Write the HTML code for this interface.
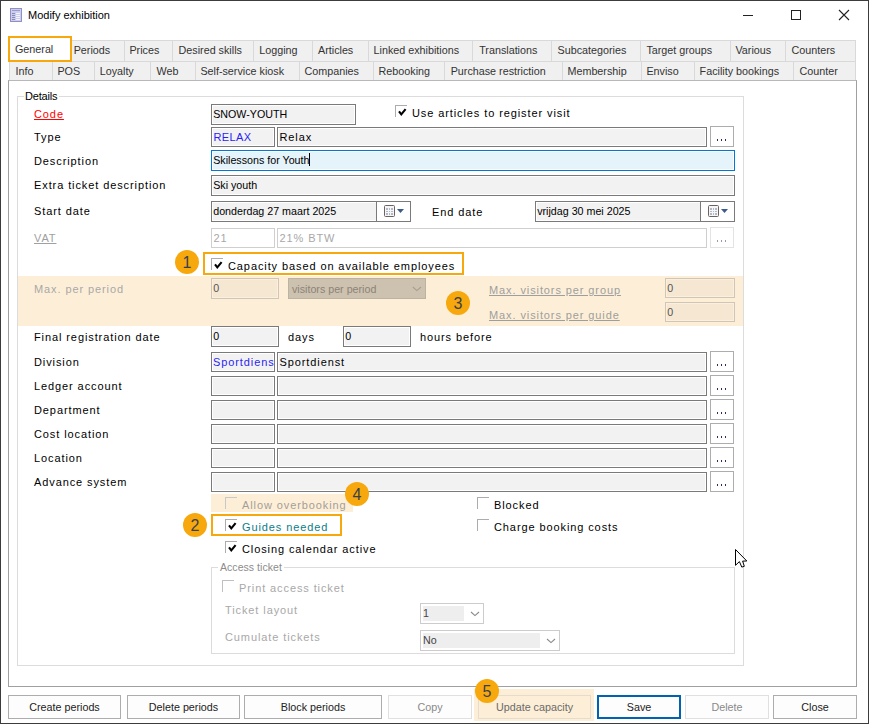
<!DOCTYPE html>
<html><head><meta charset="utf-8">
<style>
*{box-sizing:border-box;margin:0;padding:0}
html,body{width:869px;height:724px;overflow:hidden;background:#fff}
body{position:relative;font-family:"Liberation Sans",sans-serif;color:#000}
.a{position:absolute}
#win{left:0;top:0;width:869px;height:724px;border:1px solid #3c3c3c}
.title{left:28px;top:9px;font-size:11px;color:#000;white-space:pre}
.tab{position:absolute;height:21px;background:#f0f0f0;border:1px solid #d9d9d9;font-size:10.75px;color:#333;padding-left:5px;line-height:19px;white-space:pre}
.panel{left:8px;top:80px;width:849px;height:607px;border:1px solid #a0a0a0;border-top-color:#b8b8b8;background:#fff}
.lbl{position:absolute;font-size:11px;letter-spacing:0.9px;white-space:pre;color:#000;line-height:14px}
.inp{position:absolute;height:20px;background:#f2f2f2;border:1px solid #7a7a7a;box-shadow:inset 0 0 0 1px #fff;font-size:10.7px;line-height:18px;padding-left:1.2px;white-space:pre;overflow:hidden}
.inp.v{font-size:11px;letter-spacing:0.9px;padding-left:1.5px}
.dis{border-color:#cfcfcf;color:#a8a8a8;background:#fff}
.btn3{position:absolute;width:24px;height:21px;background:#fff;border:1px solid #adadad}
.btn3 i{position:absolute;left:6px;top:12px;width:1px;height:2px;background:#2e2a5e}
.chk{position:absolute;width:12px;height:12px;border-top:1px solid #acacac;border-left:1px solid #acacac}
.chk svg{position:absolute;left:1px;top:1px}
.circ{position:absolute;width:24px;height:24px;border-radius:50%;background:#f6a80c;color:#3a404c;font-size:16px;text-align:center;line-height:26px}
.obox{position:absolute;border:2px solid #f6a80c}
.btn{position:absolute;top:695px;height:24px;background:#fdfdfd;border:1px solid #adadad;font-size:10.75px;text-align:center;line-height:22px;color:#222;white-space:pre}
.gb{position:absolute;border:1px solid #dcdcdc}
</style></head><body>
<div id="win" class="a"></div>
<!-- title icon -->
<svg class="a" style="left:10px;top:8px" width="12" height="14" viewBox="0 0 12 14">
<rect x="0.5" y="0.5" width="11" height="13" fill="#cdcdee" stroke="#9090c4"/>
<rect x="2" y="2" width="8" height="1" fill="#9a9acc"/>
<rect x="2" y="5" width="3" height="1" fill="#8a8ab8"/><rect x="6" y="5" width="4" height="1" fill="#f4f4ff"/>
<rect x="2" y="7" width="3" height="1" fill="#8a8ab8"/><rect x="6" y="7" width="4" height="1" fill="#f4f4ff"/>
<rect x="2" y="9" width="3" height="1" fill="#8a8ab8"/><rect x="6" y="9" width="4" height="1" fill="#f4f4ff"/>
<rect x="2" y="11" width="3" height="1" fill="#8a8ab8"/><rect x="6" y="11" width="4" height="1" fill="#f4f4ff"/>
</svg>
<div class="a title">Modify exhibition</div>
<!-- window controls -->
<div class="a" style="left:743px;top:15px;width:10px;height:1px;background:#222"></div>
<div class="a" style="left:791px;top:10px;width:10px;height:10px;border:1px solid #222"></div>
<svg class="a" style="left:838px;top:9px" width="12" height="12" viewBox="0 0 12 12"><path d="M1 1L11 11M11 1L1 11" stroke="#222" stroke-width="1.1"/></svg>

<!-- tabs row 1 -->
<div class="tab" style="left:71px;top:40px;width:54px;height:22px;padding-left:1.7px">Periods</div>
<div class="tab" style="left:124px;top:40px;width:49px;height:22px;padding-left:4.4px">Prices</div>
<div class="tab" style="left:172px;top:40px;width:82px;height:22px;padding-left:5.6px">Desired skills</div>
<div class="tab" style="left:253px;top:40px;width:60px;height:22px;padding-left:5.3px">Logging</div>
<div class="tab" style="left:312px;top:40px;width:57px;height:22px;padding-left:5.0px">Articles</div>
<div class="tab" style="left:368px;top:40px;width:105px;height:22px;padding-left:4.6px">Linked exhibitions</div>
<div class="tab" style="left:472px;top:40px;width:80px;height:22px;padding-left:6.2px">Translations</div>
<div class="tab" style="left:551px;top:40px;width:90px;height:22px;padding-left:5.6px">Subcategories</div>
<div class="tab" style="left:640px;top:40px;width:91px;height:22px;padding-left:5.4px">Target groups</div>
<div class="tab" style="left:730px;top:40px;width:56px;height:22px;padding-left:4.5px">Various</div>
<div class="tab" style="left:785px;top:40px;width:71px;height:22px;padding-left:5.5px">Counters</div>
<!-- tabs row 2 -->
<div class="tab" style="left:9px;top:62px;width:44px;height:19px;border-top:0;line-height:18px;padding-left:5.6px">Info</div>
<div class="tab" style="left:52px;top:62px;width:43px;height:19px;border-top:0;line-height:18px;padding-left:4.4px">POS</div>
<div class="tab" style="left:94px;top:62px;width:57px;height:19px;border-top:0;line-height:18px;padding-left:4.7px">Loyalty</div>
<div class="tab" style="left:150px;top:62px;width:46px;height:19px;border-top:0;line-height:18px;padding-left:5.6px">Web</div>
<div class="tab" style="left:195px;top:62px;width:105px;height:19px;border-top:0;line-height:18px;padding-left:4.4px">Self-service kiosk</div>
<div class="tab" style="left:299px;top:62px;width:75px;height:19px;border-top:0;line-height:18px;padding-left:4.6px">Companies</div>
<div class="tab" style="left:373px;top:62px;width:72px;height:19px;border-top:0;line-height:18px;padding-left:4.6px">Rebooking</div>
<div class="tab" style="left:444px;top:62px;width:119px;height:19px;border-top:0;line-height:18px;padding-left:5.7px">Purchase restriction</div>
<div class="tab" style="left:562px;top:62px;width:80px;height:19px;border-top:0;line-height:18px;padding-left:4.5px">Membership</div>
<div class="tab" style="left:641px;top:62px;width:54px;height:19px;border-top:0;line-height:18px;padding-left:4.4px">Enviso</div>
<div class="tab" style="left:694px;top:62px;width:100px;height:19px;border-top:0;line-height:18px;padding-left:4.6px">Facility bookings</div>
<div class="tab" style="left:793px;top:62px;width:63px;height:19px;border-top:0;line-height:18px;padding-left:5.6px">Counter</div>
<!-- selected tab -->
<div class="a" style="left:8px;top:36px;width:64px;height:26px;background:#fff;border:2px solid #f6a80c;font-size:10.75px;line-height:22px;padding-left:5px;color:#333">General</div>

<!-- panel -->
<div class="a panel"></div>
<!-- Details groupbox -->
<div class="gb" style="left:17px;top:96px;width:727px;height:570px"></div>
<div class="lbl" style="left:24px;top:89px;background:#fff;padding:0 2px 0 1px;font-size:11px;letter-spacing:-0.2px">Details</div>


<!-- labels -->
<div class="lbl" style="left:34px;top:107px;color:#ff0000;text-decoration:underline">Code</div>
<div class="lbl" style="left:34px;top:130px">Type</div>
<div class="lbl" style="left:34px;top:154px">Description</div>
<div class="lbl" style="left:34px;top:178px">Extra ticket description</div>
<div class="lbl" style="left:34px;top:204px">Start date</div>
<div class="lbl" style="left:34px;top:231px;color:#a0a0a0;text-decoration:underline">VAT</div>

<!-- Code -->
<div class="inp" style="left:211px;top:104px;width:145px;height:21px">SNOW-YOUTH</div>
<div class="chk" style="left:395px;top:105px"><svg width="10" height="10" viewBox="0 0 10 10"><path d="M2 4.4L4.3 7.4L8.6 2.2" fill="none" stroke="#000" stroke-width="2.1"/></svg></div>
<div class="lbl" style="left:412px;top:106px">Use articles to register visit</div>
<!-- Type -->
<div class="inp v" style="left:211px;top:127px;width:64px;color:#2a1ef5;letter-spacing:0.4px">RELAX</div>
<div class="inp v" style="left:277px;top:127px;width:430px">Relax</div>
<div class="btn3" style="left:710px;top:126px"><i></i><i style="left:10px"></i><i style="left:14px"></i></div>
<!-- Description -->
<div class="inp" style="left:211px;top:150px;width:524px;height:21px;background:#e5f3fb;border-color:#0078d7">Skilessons for Youth<span style="display:inline-block;width:1px;height:13px;background:#000;vertical-align:-2px"></span></div>
<!-- Extra -->
<div class="inp" style="left:211px;top:175px;width:524px;height:21px">Ski youth</div>
<!-- Start date -->
<div class="inp" style="left:211px;top:201px;width:200px;height:21px">donderdag 27 maart 2025</div>
<div class="a" style="left:376px;top:202px;width:34px;height:19px;background:#fff;border-left:1px solid #7a7a7a"></div>
<svg class="a" style="left:377px;top:202px" width="33" height="19" viewBox="0 0 33 19"><rect x="7.5" y="3.5" width="10" height="11" rx="1" fill="#f4f6fa" stroke="#6e625c"/><g fill="#b4b8c2"><rect x="9" y="6" width="7" height="7"/></g><g fill="#f4f6fa"><rect x="11" y="6" width="1" height="7"/><rect x="13" y="6" width="1" height="7"/><rect x="9" y="8" width="7" height="1"/><rect x="9" y="10" width="7" height="1"/></g><path d="M20 7H27L23.5 11Z" fill="#3c5a8a"/></svg>
<div class="lbl" style="left:432px;top:205px">End date</div>
<div class="inp" style="left:535px;top:201px;width:200px;height:21px">vrijdag 30 mei 2025</div>
<div class="a" style="left:700px;top:202px;width:34px;height:19px;background:#fff;border-left:1px solid #7a7a7a"></div>
<svg class="a" style="left:701px;top:202px" width="33" height="19" viewBox="0 0 33 19"><rect x="7.5" y="3.5" width="10" height="11" rx="1" fill="#f4f6fa" stroke="#6e625c"/><g fill="#b4b8c2"><rect x="9" y="6" width="7" height="7"/></g><g fill="#f4f6fa"><rect x="11" y="6" width="1" height="7"/><rect x="13" y="6" width="1" height="7"/><rect x="9" y="8" width="7" height="1"/><rect x="9" y="10" width="7" height="1"/></g><path d="M20 7H27L23.5 11Z" fill="#3c5a8a"/></svg>
<!-- VAT -->
<div class="inp v dis" style="left:211px;top:228px;width:64px">21</div>
<div class="inp v dis" style="left:277px;top:228px;width:430px">21% BTW</div>
<div class="btn3 d" style="left:710px;top:227px;border-color:#e3e3e3"><i style="background:#9a9aa8"></i><i style="left:10px;background:#9a9aa8"></i><i style="left:14px;background:#9a9aa8"></i></div>

<!-- Capacity -->
<div class="obox" style="left:203px;top:252px;width:261px;height:23px"></div>
<div class="chk" style="left:211px;top:258px"><svg width="10" height="10" viewBox="0 0 10 10"><path d="M2 4.4L4.3 7.4L8.6 2.2" fill="none" stroke="#000" stroke-width="2.1"/></svg></div>
<div class="lbl" style="left:228px;top:259px">Capacity based on available employees</div>
<div class="circ" style="left:175px;top:250px">1</div>

<!-- peach band -->
<div class="a" style="left:18px;top:276px;width:725px;height:50px;background:#fdefd7"></div>
<div class="lbl" style="left:34px;top:282px;color:#a8a8a8">Max. per period</div>
<div class="inp" style="left:211px;top:278px;width:68px;height:21px;background:#f5e7d1;border-color:#cfc6b8;box-shadow:inset 0 0 0 1px #fcf0dc;color:#555">0</div>
<div class="a" style="left:288px;top:278px;width:138px;height:21px;background:#ccc2af;border:1px solid #bdb3a2"></div>
<div class="a" style="left:292px;top:282px;font-size:10.7px;line-height:14px;color:#8c8378;white-space:pre">visitors per period</div>
<svg class="a" style="left:412px;top:286px" width="10" height="6" viewBox="0 0 10 6"><path d="M0.8 1L4.9 4.6L9 1" fill="none" stroke="#a89e8e" stroke-width="1.1"/></svg>
<div class="circ" style="left:446px;top:291px">3</div>
<div class="lbl" style="left:489px;top:283px;color:#9e9e9e;text-decoration:underline">Max. visitors per group</div>
<div class="inp" style="left:665px;top:278px;width:70px;background:#f5e7d1;border-color:#cfc6b8;box-shadow:inset 0 0 0 1px #fcf0dc;color:#555">0</div>
<div class="lbl" style="left:489px;top:308px;color:#9e9e9e;text-decoration:underline">Max. visitors per guide</div>
<div class="inp" style="left:665px;top:302px;width:70px;background:#f5e7d1;border-color:#cfc6b8;box-shadow:inset 0 0 0 1px #fcf0dc;color:#555">0</div>

<!-- final registration -->
<div class="lbl" style="left:34px;top:330px">Final registration date</div>
<div class="inp" style="left:211px;top:326px;width:68px;height:21px">0</div>
<div class="lbl" style="left:288px;top:330px">days</div>
<div class="inp" style="left:343px;top:326px;width:68px;height:21px">0</div>
<div class="lbl" style="left:420px;top:330px">hours before</div>

<!-- division etc -->
<div class="lbl" style="left:34px;top:355px">Division</div>
<div class="inp v" style="left:211px;top:352px;width:64px;color:#2a1ef5;padding-left:1px">Sportdiens</div>
<div class="inp v" style="left:277px;top:352px;width:430px">Sportdienst</div>
<div class="btn3" style="left:710px;top:351px"><i></i><i style="left:10px"></i><i style="left:14px"></i></div>
<div class="lbl" style="left:34px;top:379px">Ledger account</div>
<div class="inp" style="left:211px;top:376px;width:64px"></div>
<div class="inp" style="left:277px;top:376px;width:430px"></div>
<div class="btn3" style="left:710px;top:375px"><i></i><i style="left:10px"></i><i style="left:14px"></i></div>
<div class="lbl" style="left:34px;top:403px">Department</div>
<div class="inp" style="left:211px;top:400px;width:64px"></div>
<div class="inp" style="left:277px;top:400px;width:430px"></div>
<div class="btn3" style="left:710px;top:399px"><i></i><i style="left:10px"></i><i style="left:14px"></i></div>
<div class="lbl" style="left:34px;top:427px">Cost location</div>
<div class="inp" style="left:211px;top:424px;width:64px"></div>
<div class="inp" style="left:277px;top:424px;width:430px"></div>
<div class="btn3" style="left:710px;top:423px"><i></i><i style="left:10px"></i><i style="left:14px"></i></div>
<div class="lbl" style="left:34px;top:451px">Location</div>
<div class="inp" style="left:211px;top:448px;width:64px"></div>
<div class="inp" style="left:277px;top:448px;width:430px"></div>
<div class="btn3" style="left:710px;top:447px"><i></i><i style="left:10px"></i><i style="left:14px"></i></div>
<div class="lbl" style="left:34px;top:475px">Advance system</div>
<div class="inp" style="left:211px;top:472px;width:64px"></div>
<div class="inp" style="left:277px;top:472px;width:430px"></div>
<div class="btn3" style="left:710px;top:471px"><i></i><i style="left:10px"></i><i style="left:14px"></i></div>

<!-- checkboxes -->
<div class="a" style="left:211px;top:494px;width:142px;height:18px;background:#fdefd7"></div>
<div class="chk" style="left:225px;top:497px;border-color:#c8c8c8"></div>
<div class="lbl" style="left:242px;top:498px;color:#a49e98">Allow overbooking</div>
<div class="circ" style="left:345px;top:482px">4</div>
<div class="obox" style="left:211px;top:514px;width:131px;height:22px"></div>
<div class="chk" style="left:225px;top:519px"><svg width="10" height="10" viewBox="0 0 10 10"><path d="M2 4.4L4.3 7.4L8.6 2.2" fill="none" stroke="#000" stroke-width="2.1"/></svg></div>
<div class="lbl" style="left:242px;top:520px;color:#0b7d89">Guides needed</div>
<div class="circ" style="left:183px;top:513px">2</div>
<div class="chk" style="left:225px;top:541px"><svg width="10" height="10" viewBox="0 0 10 10"><path d="M2 4.4L4.3 7.4L8.6 2.2" fill="none" stroke="#000" stroke-width="2.1"/></svg></div>
<div class="lbl" style="left:242px;top:542px">Closing calendar active</div>
<div class="chk" style="left:477px;top:497px"></div>
<div class="lbl" style="left:494px;top:498px">Blocked</div>
<div class="chk" style="left:477px;top:519px"></div>
<div class="lbl" style="left:494px;top:520px">Charge booking costs</div>

<!-- access ticket -->
<div class="gb" style="left:211px;top:567px;width:524px;height:87px"></div>
<div class="lbl" style="left:218px;top:560px;background:#fff;padding:0 2px;font-size:10.5px;letter-spacing:0.05px;color:#8c8c8c">Access ticket</div>
<div class="chk" style="left:222px;top:580px;border-color:#c0c0c0"></div>
<div class="lbl" style="left:239px;top:581px;color:#a8a8a8">Print access ticket</div>
<div class="lbl" style="left:225px;top:603px;color:#a8a8a8">Ticket layout</div>
<div class="a" style="left:420px;top:603px;width:64px;height:21px;border:1px solid #cccccc;background:#fff"></div>
<div class="a" style="left:423px;top:606px;width:41px;height:15px;background:#eeeeee;font-size:10.7px;line-height:15px;color:#444">1</div>
<svg class="a" style="left:470px;top:611px" width="10" height="6" viewBox="0 0 10 6"><path d="M1 1L5 4.6L9 1" fill="none" stroke="#8a8a8a" stroke-width="1.1"/></svg>
<div class="lbl" style="left:225px;top:630px;color:#a8a8a8">Cumulate tickets</div>
<div class="a" style="left:420px;top:630px;width:140px;height:21px;border:1px solid #cccccc;background:#fff"></div>
<div class="a" style="left:423px;top:633px;width:117px;height:15px;background:#eeeeee;font-size:10.7px;line-height:15px;color:#444">No</div>
<svg class="a" style="left:546px;top:638px" width="10" height="6" viewBox="0 0 10 6"><path d="M1 1L5 4.6L9 1" fill="none" stroke="#8a8a8a" stroke-width="1.1"/></svg>

<!-- buttons -->
<div class="btn" style="left:8px;width:113px">Create periods</div>
<div class="btn" style="left:127px;width:113px">Delete periods</div>
<div class="btn" style="left:244px;width:138px">Block periods</div>
<div class="btn" style="left:388px;width:84px;border-color:#e0e0e0;color:#8a8a8a">Copy</div>
<div class="a" style="left:474px;top:689px;width:120px;height:32px;background:#fdefd7"></div>
<div class="btn" style="left:478px;width:113px;background:#fdefd7;border-color:#e6dccb;color:#6a6a6a">Update capacity</div>
<div class="circ" style="left:475px;top:679px">5</div>
<div class="btn" style="left:597px;width:84px;border:2px solid #0063b1;line-height:20px">Save</div>
<div class="btn" style="left:685px;width:84px;border-color:#e0e0e0;color:#8a8a8a">Delete</div>
<div class="btn" style="left:773px;width:84px">Close</div>

<svg class="a" style="left:735px;top:549px" width="14" height="20" viewBox="0 0 14 20"><path d="M0.5 0.5L0.5 16.3L4.4 12.6L6.8 18.1L9.3 17.3L7.6 12.1L11.8 12Z" fill="#fff" stroke="#000" stroke-width="1" stroke-linejoin="round"/></svg>
</body></html>
